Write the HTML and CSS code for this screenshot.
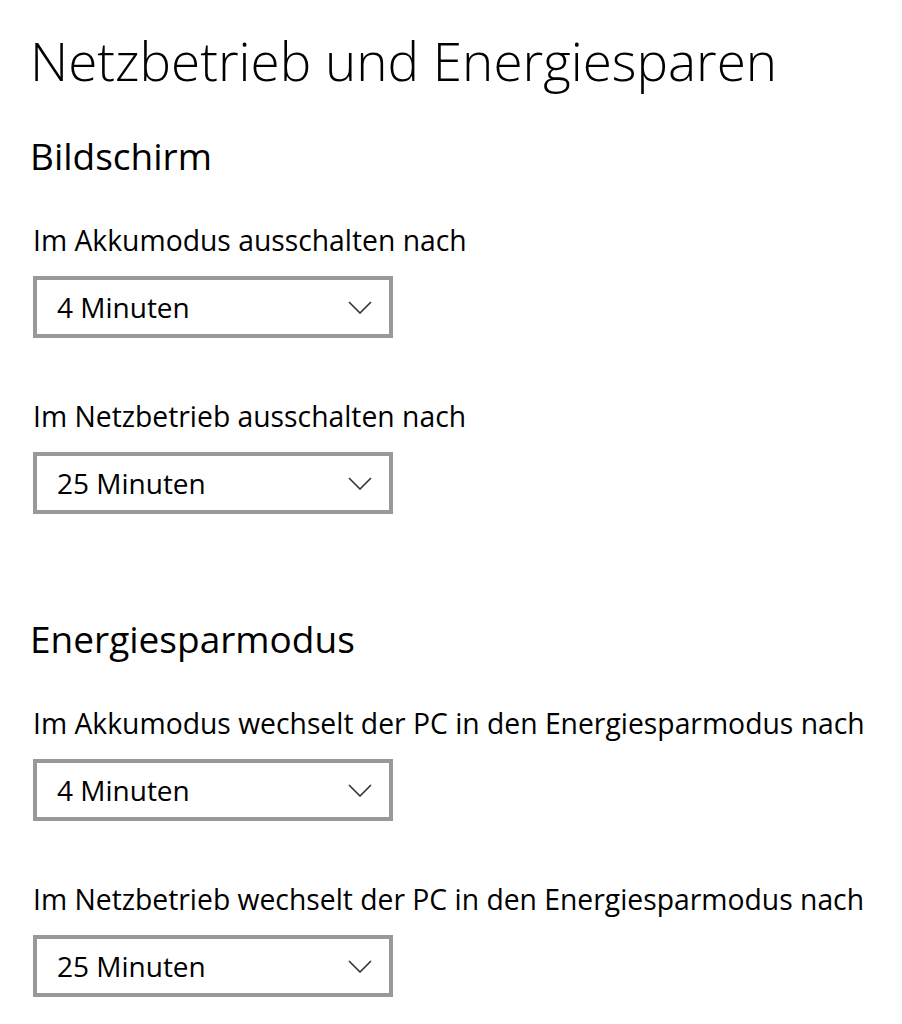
FILE: index.html
```html
<!DOCTYPE html>
<html lang="de">
<head>
<meta charset="utf-8">
<title>Netzbetrieb und Energiesparen</title>
<link rel="stylesheet" href="styles.css">
</head>
<body>
<main class="page">
  <h1 class="title">Netzbetrieb und Energiesparen</h1>

  <section class="group group-first">
    <h2 class="heading">Bildschirm</h2>
    <div class="field">
      <div class="label">Im Akkumodus ausschalten nach</div>
      <div class="select"><span class="value">4 Minuten</span><svg class="chev" viewBox="0 0 24 13" width="24" height="13"><path d="M1 1 L12 12 L23 1" fill="none" stroke="#333" stroke-width="1.6"/></svg></div>
    </div>
    <div class="field">
      <div class="label">Im Netzbetrieb ausschalten nach</div>
      <div class="select"><span class="value">25 Minuten</span><svg class="chev" viewBox="0 0 24 13" width="24" height="13"><path d="M1 1 L12 12 L23 1" fill="none" stroke="#333" stroke-width="1.6"/></svg></div>
    </div>
  </section>

  <section class="group">
    <h2 class="heading">Energiesparmodus</h2>
    <div class="field">
      <div class="label">Im Akkumodus wechselt der PC in den Energiesparmodus nach</div>
      <div class="select"><span class="value">4 Minuten</span><svg class="chev" viewBox="0 0 24 13" width="24" height="13"><path d="M1 1 L12 12 L23 1" fill="none" stroke="#333" stroke-width="1.6"/></svg></div>
    </div>
    <div class="field">
      <div class="label">Im Netzbetrieb wechselt der PC in den Energiesparmodus nach</div>
      <div class="select"><span class="value">25 Minuten</span><svg class="chev" viewBox="0 0 24 13" width="24" height="13"><path d="M1 1 L12 12 L23 1" fill="none" stroke="#333" stroke-width="1.6"/></svg></div>
    </div>
  </section>
</main>
</body>
</html>
```

FILE: styles.css
```css
html, body {
  margin: 0;
  padding: 0;
  background: #ffffff;
}

body {
  font-family: "Open Sans", "Noto Sans", "Liberation Sans", sans-serif;
  color: #000;
}

.page {
  padding: 21px 0 0 30px;
}

.title {
  margin: 0;
  font-size: 53px;
  font-weight: 300;
  line-height: 80px;
  letter-spacing: 0;
}

.group {
  display: flex;
  flex-direction: column;
  margin-top: 97px;
}

.group-first {
  margin-top: 27px;
}

.heading {
  margin: 0 0 36px 0;
  font-size: 37px;
  font-weight: 400;
  line-height: 56px;
}

.field {
  display: flex;
  flex-direction: column;
  gap: 16px;
  margin-left: 3px;
}

.field + .field {
  margin-top: 58px;
}

.label {
  font-size: 28.3px;
  line-height: 40px;
}

.select {
  box-sizing: border-box;
  width: 360px;
  height: 62px;
  border: 4px solid #999999;
  display: flex;
  align-items: center;
  justify-content: space-between;
  padding: 0 17px 0 20px;
}

.value {
  font-size: 28px;
  line-height: 54px;
}

.chev {
  display: block;
}
```
